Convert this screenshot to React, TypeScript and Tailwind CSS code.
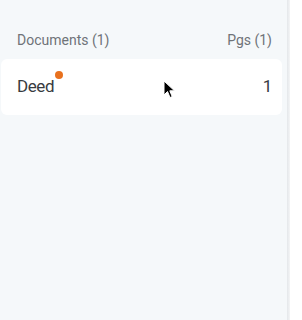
export default function App() {
  return (
    <div className="flex h-[320px] w-[302px] bg-white" style={{ fontFamily: 'Roboto, "Noto Sans", sans-serif' }}>
      <div className="relative h-full w-[287px] bg-[#f5f8fa]">
        <div className="flex items-center justify-between pl-[17px] pr-[15px] pt-[30px] pb-[8px] text-[14px] text-[#6f7378]">
          <span>Documents (1)</span>
          <span>Pgs (1)</span>
        </div>
        <div className="ml-[1px] mr-[5px] flex h-[56px] items-center justify-between rounded-[6px] bg-white pl-[16px] pr-[10px] text-[17px] tracking-[-0.4px] text-[#383b3f]">
          <span className="relative">
            Deed
            <span className="absolute -right-[9px] -top-[3px] h-[8px] w-[8px] rounded-full bg-[#e8711e]" />
          </span>
          <span>1</span>
        </div>
        <svg className="absolute left-[163px] top-[80px]" width="14" height="20" viewBox="0 0 14 20">
          <path d="M1 1 L1 15 L4.5 11.5 L7 17.5 L9.2 16.6 L6.8 10.8 L11.5 10.8 Z" fill="#000" stroke="#fff" strokeWidth="1" />
        </svg>
      </div>
      <div className="h-full w-[3px] bg-gradient-to-r from-[#e4e7ea] to-[#f4f5f6]" />
      <div className="flex-1 bg-white" />
    </div>
  );
}
